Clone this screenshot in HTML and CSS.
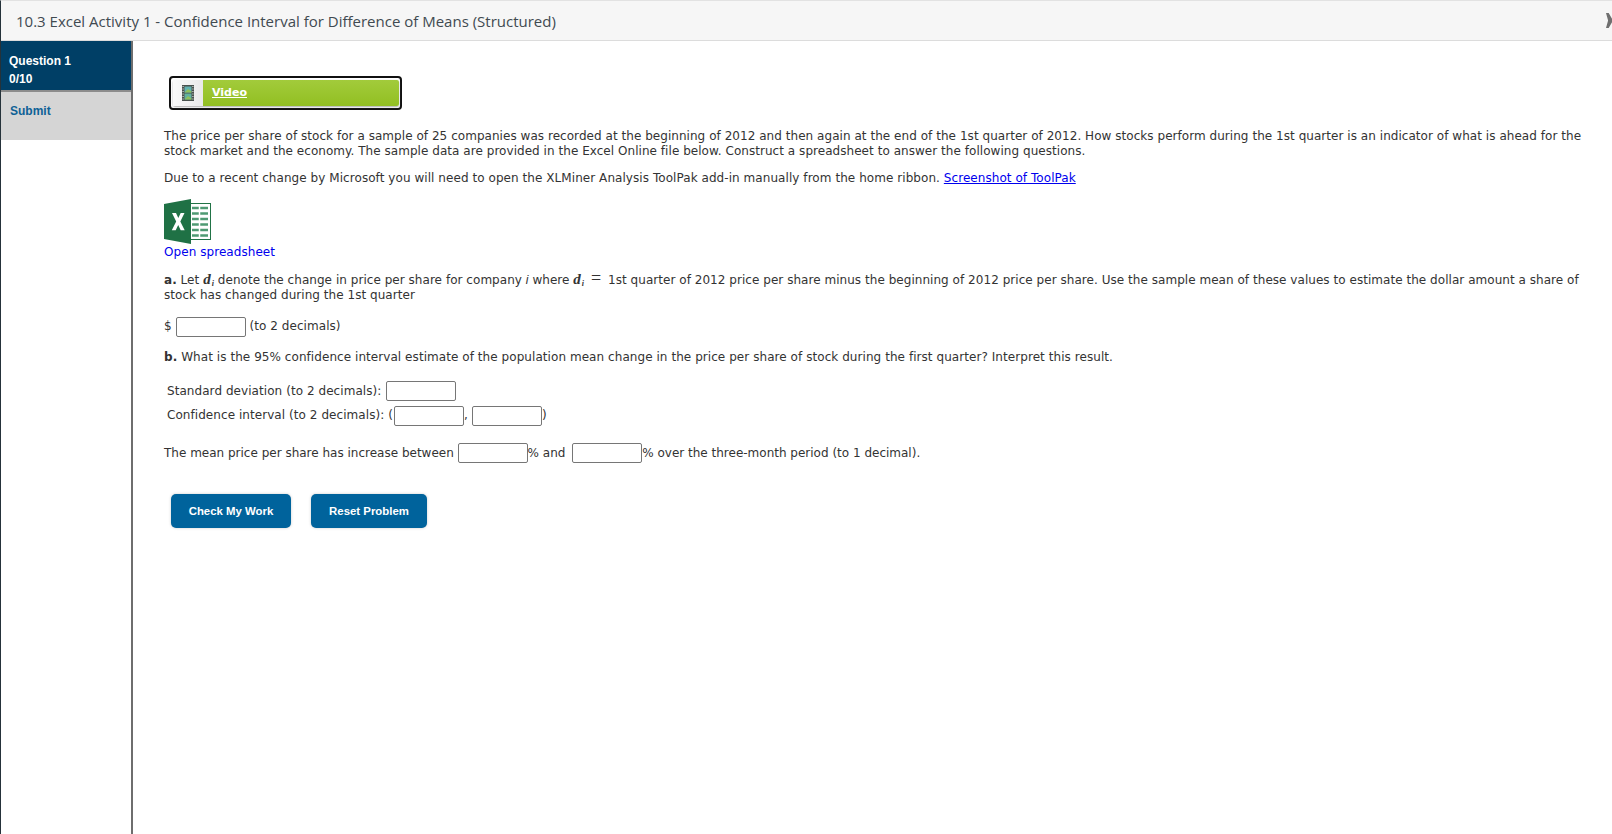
FILE: index.html
```html
<!DOCTYPE html>
<html lang="en">
<head>
<meta charset="utf-8">
<title>10.3 Excel Activity 1</title>
<link rel="stylesheet" href="styles.css">
</head>
<body>
<div class="frame">
  <header class="topbar">
    <h1 class="title">10.3 Excel Activity 1 - Confidence Interval for Difference of Means (Structured)</h1>
    <span class="close-mark"></span>
  </header>
  <div class="body-row">
    <aside class="sidebar">
      <div class="question-tab">Question 1<br>0/10</div>
      <div class="submit-tab">Submit</div>
    </aside>
    <main class="content">
      <div class="video-box">
        <div class="video-inner">
          <span class="video-icon">
            <svg width="12" height="16" viewBox="0 0 12 16">
              <rect x="0" y="0" width="12" height="16" fill="#4a524e"/>
              <rect x="2.500" y="1.500" width="7" height="6" fill="#62b2b0"/>
              <rect x="2.500" y="8.500" width="7" height="6" fill="#62b2a0"/>
              <path d="M2.500 7.500 L6 4 L9.500 6.500 V7.500 Z M2.500 14.500 L6 11 L9.500 13.500 V14.500 Z" fill="#8fc25b"/>
              <path d="M.5 1.500h1.200M.5 4h1.200M.5 6.500h1.200M.5 9h1.200M.5 11.500h1.200M.5 14h1.200M10.300 1.500h1.200M10.300 4h1.200M10.300 6.500h1.200M10.300 9h1.200M10.300 11.500h1.200M10.300 14h1.200" stroke="#d0d4d0" stroke-width="1.100"/>
            </svg>
          </span>
          <a class="video-link" href="#">Video</a>
        </div>
      </div>
      <p class="para intro">The price per share of stock for a sample of 25 companies was recorded at the beginning of 2012 and then again at the end of the 1st quarter of 2012. How stocks perform during the 1st quarter is an indicator of what is ahead for the stock market and the economy. The sample data are provided in the Excel Online file below. Construct a spreadsheet to answer the following questions.</p>
      <p class="para notice">Due to a recent change by Microsoft you will need to open the XLMiner Analysis ToolPak add-in manually from the home ribbon. <a class="link-underline" href="#">Screenshot of ToolPak</a></p>
      <div class="excel-icon">
        <svg width="47" height="45" viewBox="0 0 47 45">
          <rect x="26" y="4.500" width="20.500" height="36" fill="#fff" stroke="#217346" stroke-width="1"/>
          <path d="M28 9h16M28 14.500h16M28 20h16M28 25.500h16M28 31h16M28 36.500h16" stroke="#4f9a73" stroke-width="2.400"/>
          <path d="M35.500 7v31" stroke="#fff" stroke-width="1.500"/>
          <path d="M0 5 L27 0 V45 L0 40 Z" fill="#1f7145"/>
          <path d="M8 14h4l2.300 5 2.400-5h3.800l-4.200 8.500 4.400 8.800h-4l-2.500-5.400-2.500 5.400H7.800l4.400-8.800Z" fill="#fff"/>
        </svg>
      </div>
      <a class="open-sheet" href="#">Open spreadsheet</a>
      <p class="para part-a"><b>a.</b> Let <span class="math"><i>d</i><sub>i</sub></span> denote the change in price per share for company <i class="slim">i</i> where <span class="math"><i>d</i><sub>i</sub></span> <span class="equals">=</span> 1st quarter of 2012 price per share minus the beginning of 2012 price per share. Use the sample mean of these values to estimate the dollar amount a share of stock has changed during the 1st quarter</p>
      <div class="answer-row">$ <input class="answer" type="text" aria-label="Change"> (to 2 decimals)</div>
      <p class="para part-b"><b>b.</b> What is the 95% confidence interval estimate of the population mean change in the price per share of stock during the first quarter? Interpret this result.</p>
      <div class="stat-row first">Standard deviation (to 2 decimals): <input class="answer stat-input" type="text" aria-label="Standard deviation"></div>
      <div class="stat-row">Confidence interval (to 2 decimals): (<input class="answer stat-input" type="text" aria-label="Lower"><span class="comma">,</span><input class="answer" type="text" aria-label="Upper">)</div>
      <div class="mean-row">The mean price per share has increase between <input class="answer" type="text" aria-label="From">% and <input class="answer second" type="text" aria-label="To">% over the three-month period (to 1 decimal).</div>
      <div class="actions">
        <button class="action check" type="button">Check My Work</button>
        <button class="action reset" type="button">Reset Problem</button>
      </div>
    </main>
  </div>
</div>
</body>
</html>
```
FILE: styles.css
```css
* { box-sizing: border-box; }
html, body { margin: 0; height: 100%; }
body {
  background: #fff;
  color: #333;
  font-family: "DejaVu Sans", Verdana, sans-serif;
  font-size: 12px;
  letter-spacing: 0.06px;
  overflow: hidden;
}
.frame {
  height: 834px;
  display: flex;
  flex-direction: column;
  border-left: 1px solid #25323a;
  border-top: 1px solid #e2e2e2;
}
.topbar {
  height: 40px;
  flex: none;
  background: #f6f6f6;
  border-bottom: 1px solid #dcdcdc;
  display: flex;
  align-items: center;
  justify-content: space-between;
  padding-left: 15px;
}
.title {
  margin: 0;
  font: 400 15px/20px "Open Sans", sans-serif;
  letter-spacing: 0;
  color: #414a51;
}
.close-mark {
  width: 6px;
  height: 15px;
  background: #6f6f6f;
  clip-path: polygon(0 0, 45% 0, 100% 38%, 100% 62%, 45% 100%, 0 100%, 35% 50%);
}
.body-row { flex: 1; display: flex; min-height: 0; }
.sidebar {
  width: 132px;
  flex: none;
  border-right: 2px solid #6e6e6e;
  font: 700 12px/18px "Liberation Sans", Arial, sans-serif;
  letter-spacing: 0;
}
.question-tab {
  height: 49px;
  background: #003f66;
  color: #fff;
  padding: 11px 0 0 8px;
}
.submit-tab {
  height: 50px;
  background: #d5d5d5;
  border-top: 2px solid #8c8c8c;
  color: #0e6196;
  padding: 10px 0 0 9px;
}
.content { flex: 1; padding: 35px 20px 0 31px; min-width: 0; }
.video-box {
  width: 233px;
  height: 34px;
  margin-left: 5px;
  border: 2px solid #111;
  border-radius: 4px;
  padding: 2px 1px 2px 2px;
  background: #fff;
}
.video-inner {
  height: 26px;
  display: flex;
  align-items: stretch;
  background: linear-gradient(#a2cb3b, #92bf22);
  border-radius: 2px;
  box-shadow: 0 1px 2px #aaa;
}
.video-icon {
  width: 30px;
  flex: none;
  display: flex;
  align-items: center;
  justify-content: center;
  background: linear-gradient(90deg, #fafafa, #e9e9e9);
}
.video-link {
  margin-left: 9px;
  line-height: 25px;
  color: #fff;
  font-weight: 700;
  font-size: 11px;
  letter-spacing: 0;
}
.para { margin: 0; line-height: 15px; }
.intro { margin-top: 19px; letter-spacing: 0.043px; }
.notice { margin-top: 12px; }
.link-underline { color: #00e; }
.excel-icon { margin-top: 13px; height: 45px; line-height: 0; }
.open-sheet {
  display: block;
  margin-top: 0;
  line-height: 16px;
  color: #00e;
  text-decoration: none;
}
.part-a { margin-top: 13px; letter-spacing: 0.04px; }
.math { font-family: "Liberation Serif", serif; font-size: 15px; font-weight: 700; line-height: 0; }
.math sub { font-size: 8px; font-style: italic; line-height: 0; margin-left: 1px; vertical-align: -2px; }
.slim { font-family: "Liberation Sans", sans-serif; }
.equals { font-family: "Liberation Serif", serif; font-size: 18px; line-height: 0; margin: 0 3px; }
.answer {
  width: 70px;
  height: 20px;
  margin: 0;
  padding: 0;
  border: 1px solid #767676;
  border-radius: 2px;
  background: #fff;
  vertical-align: middle;
}
.stat-input { margin-left: 1px; }
.second { margin-left: 3px; }
.answer-row { margin-top: 13px; line-height: 20px; }
.part-b { margin-top: 13px; }
.stat-row { margin-left: 3px; line-height: 20px; margin-top: 4px; }
.stat-row.first { margin-top: 16px; }
.comma { display: inline-block; width: 8px; }
.mean-row { margin-top: 17px; line-height: 20px; letter-spacing: 0; }
.actions { display: flex; gap: 20px; margin: 31px 0 0 7px; }
.action {
  height: 34px;
  border: 0;
  border-radius: 5px;
  background: #00639c;
  color: #fff;
  font: 700 11.4px "Liberation Sans", Arial, sans-serif;
  box-shadow: 0 0 3px #ccc;
}
.check { width: 120px; }
.reset { width: 116px; }
```
